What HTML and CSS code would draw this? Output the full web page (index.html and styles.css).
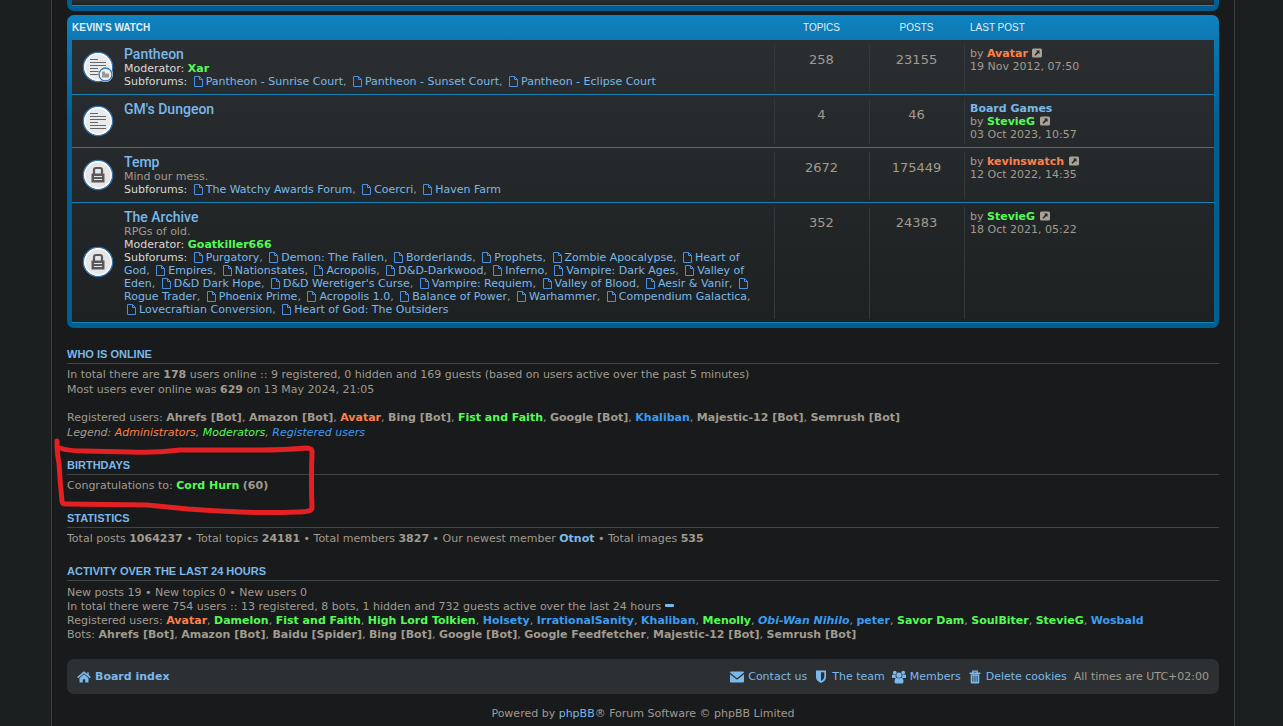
FILE: index.html
```
<!DOCTYPE html>
<html lang="en">
<head>
    <meta charset="UTF-8">
    <meta name="viewport" content="width=device-width, initial-scale=1.0">
    <title>Kevin's Watch - Board index</title>
    <link rel="stylesheet" href="styles.css">
</head>
<body>

    <!-- icon shapes -->
    <svg class="sprite" aria-hidden="true">
        <symbol id="file" viewBox="0 0 12 12">
            <path d="M1.5 1.5h5l3 3v7h-8z M6.5 1.5v3h3" fill="none" stroke="currentColor"/>
        </symbol>
        <symbol id="ext" viewBox="0 0 10 10">
            <rect width="10" height="9" y="0.5" rx="1.5" fill="currentColor"/>
            <path d="M4 2.500h3.500V6L6.300 4.900 3.500 7.700 2.500 6.700l2.700-2.900z" fill="#222526"/>
        </symbol>
        <symbol id="read" viewBox="0 0 32 32">
            <circle cx="16" cy="16" r="14.5" fill="#e9eaec" stroke="#3573ad" stroke-width="1.6"/>
            <circle cx="16" cy="16" r="13.2" fill="none" stroke="#fff" stroke-width="1.4"/>
            <path d="M8 8.5h8M8 11.5h16M8 14.5h16M8 17.5h8M8 20.5h16M8 23.5h16" stroke="#666" fill="none"/>
        </symbol>
        <symbol id="read-sub" viewBox="0 0 32 32">
            <use href="#read"/>
            <circle cx="23.5" cy="23.5" r="7.5" fill="#fff"/>
            <circle cx="23.5" cy="23.5" r="6.5" fill="#eee" stroke="#3573ad" stroke-width="1.3"/>
            <path d="M20 20.5h3v2h4v4h-7z" fill="#999"/>
        </symbol>
        <symbol id="locked" viewBox="0 0 32 32">
            <circle cx="16" cy="16" r="14.5" fill="#e6e6e8" stroke="#3573ad" stroke-width="1.6"/>
            <circle cx="16" cy="16" r="13.2" fill="none" stroke="#fff" stroke-width="1.4"/>
            <path d="M12 15v-4q0-2 2-2h4q2 0 2 2v4" fill="none" stroke="#595959" stroke-width="2.2"/>
            <path d="M9.5 14.5h13v9h-13z" fill="#595959"/>
            <path d="M12 17.5h8M12 20.5h8" stroke="#e6e6e8"/>
        </symbol>
        <symbol id="home" viewBox="0 0 14 12">
            <path d="M7 3.2L2.5 7v4.5h3.3V8.3h2.4v3.2h3.3V7z" fill="currentColor"/>
            <path d="M.6 6.6L7 1.3l6.4 5.3M11 1.2v3" fill="none" stroke="currentColor" stroke-width="1.5"/>
        </symbol>
        <symbol id="mail" viewBox="0 0 14 12">
            <path d="M0 1.5Q0 .5 1 .5h12q1 0 1 1L7 7.2z" fill="currentColor"/>
            <path d="M0 3.2l7 5.5 7-5.5v7.3q0 1-1 1H1q-1 0-1-1z" fill="currentColor"/>
        </symbol>
        <symbol id="shield" viewBox="0 0 12 14">
            <path d="M1 .5h10v6.7Q11 10.800 6 13 1 10.800 1 7.200z M6 2.200v8.900q3.300-1.700 3.300-4V2.200z" fill="currentColor" fill-rule="evenodd"/>
        </symbol>
        <symbol id="users" viewBox="0 0 15 14">
            <circle cx="3" cy="2.300" r="2" fill="currentColor"/>
            <circle cx="12" cy="2.300" r="2" fill="currentColor"/>
            <path d="M0 8V5.500q0-1.400 1.500-1.200l2.500.2Q3.500 7 4.700 8z M15 8V5.500q0-1.400-1.500-1.200L11 4.500q.5 2.500-.7 3.500z" fill="currentColor"/>
            <circle cx="7.500" cy="5" r="2.800" fill="currentColor"/>
            <path d="M2.700 12q0-4 2.300-4.300 2.500 1.400 5 0 2.300.3 2.300 4.300 0 2-2 2H4.700q-2 0-2-2z" fill="currentColor"/>
        </symbol>
        <symbol id="trash" viewBox="0 0 12 13">
            <path d="M1 3h10M4 2.500V1h4v1.500" fill="none" stroke="currentColor" stroke-width="1.300"/>
            <path d="M2 4h8v7.500q0 1-1 1H3q-1 0-1-1z M3.600 5.300v5.500h.8V5.300z M5.600 5.300v5.500h.8V5.300z M7.600 5.300v5.500h.8V5.300z" fill="currentColor" fill-rule="evenodd"/>
        </symbol>
    </svg>

    <div class="wrap">

        <div class="forabg forabg-cut">
            <table class="forums">
                <tr><td class="info"></td><td class="num"></td><td class="num"></td><td class="last"></td></tr>
            </table>
        </div>

        <div class="forabg">
            <table class="forums">
                <thead>
                    <tr>
                        <th class="info">Kevin's Watch</th>
                        <th class="num">Topics</th>
                        <th class="num">Posts</th>
                        <th class="last">Last post</th>
                    </tr>
                </thead>
                <tbody>
                    <tr>
                        <td class="info">
                            <div class="row">
                                <svg class="status"><use href="#read-sub"/></svg>
                                <div class="desc">
                                    <a href="#" class="title">Pantheon</a>
                                    <div><span class="label">Moderator:</span> <a href="#" class="mod">Xar</a></div>
                                    <div><span class="label">Subforums:</span>
                                        <a href="#"><svg class="file"><use href="#file"/></svg>Pantheon - Sunrise Court</a>,
                                        <a href="#"><svg class="file"><use href="#file"/></svg>Pantheon - Sunset Court</a>,
                                        <a href="#"><svg class="file"><use href="#file"/></svg>Pantheon - Eclipse Court</a></div>
                                </div>
                            </div>
                        </td>
                        <td class="num">258</td>
                        <td class="num">23155</td>
                        <td class="last">by <a href="#" class="admin">Avatar</a> <a href="#" class="view" aria-label="View the latest post"><svg class="ext"><use href="#ext"/></svg></a><br>19 Nov 2012, 07:50</td>
                    </tr>
                    <tr>
                        <td class="info">
                            <div class="row">
                                <svg class="status"><use href="#read"/></svg>
                                <div class="desc">
                                    <a href="#" class="title">GM's Dungeon</a>
                                </div>
                            </div>
                        </td>
                        <td class="num">4</td>
                        <td class="num">46</td>
                        <td class="last"><a href="#" class="topic">Board Games</a><br>by <a href="#" class="mod">StevieG</a> <a href="#" class="view" aria-label="View the latest post"><svg class="ext"><use href="#ext"/></svg></a><br>03 Oct 2023, 10:57</td>
                    </tr>
                    <tr>
                        <td class="info">
                            <div class="row">
                                <svg class="status"><use href="#locked"/></svg>
                                <div class="desc">
                                    <a href="#" class="title">Temp</a>
                                    <div>Mind our mess.</div>
                                    <div><span class="label">Subforums:</span>
                                        <a href="#"><svg class="file"><use href="#file"/></svg>The Watchy Awards Forum</a>,
                                        <a href="#"><svg class="file"><use href="#file"/></svg>Coercri</a>,
                                        <a href="#"><svg class="file"><use href="#file"/></svg>Haven Farm</a></div>
                                </div>
                            </div>
                        </td>
                        <td class="num">2672</td>
                        <td class="num">175449</td>
                        <td class="last">by <a href="#" class="admin">kevinswatch</a> <a href="#" class="view" aria-label="View the latest post"><svg class="ext"><use href="#ext"/></svg></a><br>12 Oct 2022, 14:35</td>
                    </tr>
                    <tr>
                        <td class="info">
                            <div class="row">
                                <svg class="status"><use href="#locked"/></svg>
                                <div class="desc">
                                    <a href="#" class="title">The Archive</a>
                                    <div>RPGs of old.</div>
                                    <div><span class="label">Moderator:</span> <a href="#" class="mod">Goatkiller666</a></div>
                                    <div><span class="label">Subforums:</span>
                                        <a href="#"><svg class="file"><use href="#file"/></svg>Purgatory</a>,
                                        <a href="#"><svg class="file"><use href="#file"/></svg>Demon: The Fallen</a>,
                                        <a href="#"><svg class="file"><use href="#file"/></svg>Borderlands</a>,
                                        <a href="#"><svg class="file"><use href="#file"/></svg>Prophets</a>,
                                        <a href="#"><svg class="file"><use href="#file"/></svg>Zombie Apocalypse</a>,
                                        <a href="#"><svg class="file"><use href="#file"/></svg>Heart of<br>God</a>,
                                        <a href="#"><svg class="file"><use href="#file"/></svg>Empires</a>,
                                        <a href="#"><svg class="file"><use href="#file"/></svg>Nationstates</a>,
                                        <a href="#"><svg class="file"><use href="#file"/></svg>Acropolis</a>,
                                        <a href="#"><svg class="file"><use href="#file"/></svg>D&amp;D-Darkwood</a>,
                                        <a href="#"><svg class="file"><use href="#file"/></svg>Inferno</a>,
                                        <a href="#"><svg class="file"><use href="#file"/></svg>Vampire: Dark Ages</a>,
                                        <a href="#"><svg class="file"><use href="#file"/></svg>Valley of<br>Eden</a>,
                                        <a href="#"><svg class="file"><use href="#file"/></svg>D&amp;D Dark Hope</a>,
                                        <a href="#"><svg class="file"><use href="#file"/></svg>D&amp;D Weretiger's Curse</a>,
                                        <a href="#"><svg class="file"><use href="#file"/></svg>Vampire: Requiem</a>,
                                        <a href="#"><svg class="file"><use href="#file"/></svg>Valley of Blood</a>,
                                        <a href="#"><svg class="file"><use href="#file"/></svg>Aesir &amp; Vanir</a>,
                                        <a href="#"><svg class="file"><use href="#file"/></svg><br>Rogue Trader</a>,
                                        <a href="#"><svg class="file"><use href="#file"/></svg>Phoenix Prime</a>,
                                        <a href="#"><svg class="file"><use href="#file"/></svg>Acropolis 1.0</a>,
                                        <a href="#"><svg class="file"><use href="#file"/></svg>Balance of Power</a>,
                                        <a href="#"><svg class="file"><use href="#file"/></svg>Warhammer</a>,
                                        <a href="#"><svg class="file"><use href="#file"/></svg>Compendium Galactica</a>,<br>
                                        <a href="#"><svg class="file"><use href="#file"/></svg>Lovecraftian Conversion</a>,
                                        <a href="#"><svg class="file"><use href="#file"/></svg>Heart of God: The Outsiders</a></div>
                                </div>
                            </div>
                        </td>
                        <td class="num">352</td>
                        <td class="num">24383</td>
                        <td class="last">by <a href="#" class="mod">StevieG</a> <a href="#" class="view" aria-label="View the latest post"><svg class="ext"><use href="#ext"/></svg></a><br>18 Oct 2021, 05:22</td>
                    </tr>
                </tbody>
            </table>
        </div>

        <div class="stat-block">
            <h3>Who is online</h3>
            <p>In total there are <strong>178</strong> users online :: 9 registered, 0 hidden and 169 guests (based on users active over the past 5 minutes)<br>
            Most users ever online was <strong>629</strong> on 13 May 2024, 21:05</p>
            <p>Registered users: <strong>Ahrefs [Bot]</strong>, <strong>Amazon [Bot]</strong>, <a href="#" class="admin">Avatar</a>, <strong>Bing [Bot]</strong>, <a href="#" class="mod">Fist and Faith</a>, <strong>Google [Bot]</strong>, <a href="#" class="user">Khaliban</a>, <strong>Majestic-12 [Bot]</strong>, <strong>Semrush [Bot]</strong><br>
            <em class="legend">Legend: <a href="#" class="admin">Administrators</a>, <a href="#" class="mod">Moderators</a>, <a href="#" class="user">Registered users</a></em></p>
        </div>

        <div class="stat-block birthdays">
            <h3>Birthdays</h3>
            <p>Congratulations to: <a href="#" class="mod">Cord Hurn</a> <strong>(60)</strong></p>
            <svg class="scribble" viewBox="0 0 270 86" aria-hidden="true">
                <path d="M7 6Q7 19 9 28 10 47 12 66 12 69 16 69L97 70Q118 72 138 74 165 76 190 77 215 78 248 77 262 77 262 73 261 45 262 18 263 13 256 13 235 15 210 15L130 15Q105 18 80 17L35 16Q18 16 10 13"/>
            </svg>
        </div>

        <div class="stat-block">
            <h3>Statistics</h3>
            <p>Total posts <strong>1064237</strong> &bull; Total topics <strong>24181</strong> &bull; Total members <strong>3827</strong> &bull; Our newest member <a href="#" class="topic">Otnot</a> &bull; Total images <strong>535</strong></p>
        </div>

        <div class="stat-block activity">
            <h3>Activity over the last 24 hours</h3>
            <p>New posts 19 &bull; New topics 0 &bull; New users 0<br>
            In total there were 754 users :: 13 registered, 8 bots, 1 hidden and 732 guests active over the last 24 hours <button type="button" class="toggle" aria-label="Collapse"></button><br>
            Registered users: <a href="#" class="admin">Avatar</a>, <a href="#" class="mod">Damelon</a>, <a href="#" class="mod">Fist and Faith</a>, <a href="#" class="mod">High Lord Tolkien</a>, <a href="#" class="user">Holsety</a>, <a href="#" class="user">IrrationalSanity</a>, <a href="#" class="user">Khaliban</a>, <a href="#" class="mod">Menolly</a>, <em><a href="#" class="user">Obi-Wan Nihilo</a></em>, <a href="#" class="user">peter</a>, <a href="#" class="mod">Savor Dam</a>, <a href="#" class="mod">SoulBiter</a>, <a href="#" class="mod">StevieG</a>, <a href="#" class="user">Wosbald</a><br>
            Bots: <strong>Ahrefs [Bot]</strong>, <strong>Amazon [Bot]</strong>, <strong>Baidu [Spider]</strong>, <strong>Bing [Bot]</strong>, <strong>Google [Bot]</strong>, <strong>Google Feedfetcher</strong>, <strong>Majestic-12 [Bot]</strong>, <strong>Semrush [Bot]</strong></p>
        </div>

        <nav class="navbar">
            <a href="#" class="crumb"><svg class="nav-icon"><use href="#home"/></svg>Board index</a>
            <a href="#"><svg class="nav-icon"><use href="#mail"/></svg>Contact us</a>
            <a href="#"><svg class="nav-icon"><use href="#shield"/></svg>The team</a>
            <a href="#"><svg class="nav-icon"><use href="#users"/></svg>Members</a>
            <a href="#"><svg class="nav-icon"><use href="#trash"/></svg>Delete cookies</a>
            <span>All times are UTC+02:00</span>
        </nav>

        <p class="copyright">Powered by <a href="#">phpBB</a>&reg; Forum Software &copy; phpBB Limited</p>
    </div>

</body>
</html>
```
FILE: styles.css
```
body {
    margin: 0;
    padding: 0 48px 0 51px;
    background-color: #1b1f20;
    color: #a19b90;
    font-family: Verdana, "DejaVu Sans", sans-serif;
    font-size: 11px;
    line-height: 13px;
}
a {
    color: #7ab8ea;
    text-decoration: none;
}
a:hover {
    text-decoration: underline;
}
p {
    margin: 0;
}
.sprite {
    display: none;
}
.wrap {
    box-sizing: border-box;
    padding: 0 15px 8px;
    border: 1px solid #3a3f41;
    border-width: 0 1px;
    background-color: #181a1b;
}
.admin, .mod, .user, .topic {
    font-weight: bold;
}
.admin {
    color: #ff804a;
}
.mod {
    color: #55fb55;
}
.user {
    color: #3b9cf0;
}
.label {
    color: #dcd9d4;
}

/* forum list */
.forabg {
    padding: 0 5px 5px;
    border-radius: 7px;
    background: linear-gradient(to bottom, #0f83c0 0, #0b76b0 30px, #005f92 110px);
    margin-bottom: 20px;
}
.forabg-cut {
    margin-bottom: 4px;
    border-radius: 0 0 7px 7px;
    background: #005f92;
}
.forums {
    width: 100%;
    table-layout: fixed;
    border-collapse: separate;
    border-spacing: 0;
}
.forums tbody {
    background: linear-gradient(to bottom, #2b2e30, #1e2122);
}
.forums th {
    height: 25px;
    padding: 0;
    color: #e0eef6;
    font-family: Arial, "Liberation Sans", sans-serif;
    font-size: 10px;
    font-weight: normal;
    text-align: left;
    text-transform: uppercase;
}
.forums th.info {
    font-weight: bold;
}
.forums td {
    padding: 7px 0 6px;
    border-bottom: 1px solid #1482b6;
    vertical-align: top;
}
.forabg-cut td {
    height: 5px;
    padding: 0;
}
.forums .num {
    width: 95px;
    text-align: center;
}
.forums .last {
    width: 244px;
    padding-left: 6px;
}
td.num, td.last {
    background: linear-gradient(#34393b, #34393b) no-repeat left 4px / 1px calc(100% - 7px);
}
td.num {
    font-size: 13px;
}
.forums tbody td.num {
    padding-top: 13px;
}
.forabg-cut tbody td.num {
    padding-top: 0;
}
.row {
    display: flex;
    align-items: center;
    gap: 10px;
    min-height: 39px;
    padding: 0 10px;
}
.status {
    flex: none;
    width: 32px;
    height: 32px;
    margin-bottom: 2px;
}
.desc {
    flex: 1;
    align-self: flex-start;
}
.title {
    display: block;
    font-family: "Trebuchet MS", Roboto, sans-serif;
    font-size: 14px;
    font-weight: 500;
    line-height: 15px;
}
.file {
    width: 12px;
    height: 12px;
    margin: 0 1px 0 2px;
    vertical-align: -2px;
    color: #4a8fe0;
}
.ext {
    width: 10px;
    height: 10px;
    margin-left: 1px;
    vertical-align: -1px;
    color: #a8a196;
}

/* statistics */
.stat-block {
    margin-bottom: 19px;
    line-height: 15px;
}
.stat-block h3 {
    margin: 0 0 3px;
    padding-bottom: 2px;
    border-bottom: 1px solid #404546;
    color: #7ab8ea;
    font-family: Arial, "Liberation Sans", sans-serif;
    font-size: 11px;
    line-height: 13px;
    text-transform: uppercase;
}
.stat-block p + p {
    margin-top: 13px;
}
.legend a {
    font-weight: normal;
}
.activity {
    margin-bottom: 17px;
    line-height: 14px;
}
.activity h3 {
    margin-bottom: 5px;
}
.toggle {
    width: 9px;
    height: 3px;
    padding: 0;
    border: none;
    border-radius: 1px;
    background-color: #7ab8ea;
    vertical-align: 3px;
    cursor: pointer;
}
.birthdays {
    position: relative;
}
.scribble {
    position: absolute;
    top: -24px;
    left: -17px;
    width: 270px;
    height: 86px;
    fill: none;
    stroke: #e32023;
    stroke-width: 5;
    stroke-linecap: round;
    stroke-linejoin: round;
    pointer-events: none;
}

/* footer */
.navbar {
    display: flex;
    align-items: center;
    gap: 7px;
    min-height: 35px;
    padding: 0 10px;
    border-radius: 7px;
    background-color: #2c3032;
}
.navbar a {
    display: flex;
    align-items: center;
    gap: 4px;
}
.navbar .crumb {
    margin-right: auto;
    font-weight: bold;
}
.nav-icon {
    width: 14px;
    height: 14px;
}
.copyright {
    margin-top: 13px;
    text-align: center;
}
```
